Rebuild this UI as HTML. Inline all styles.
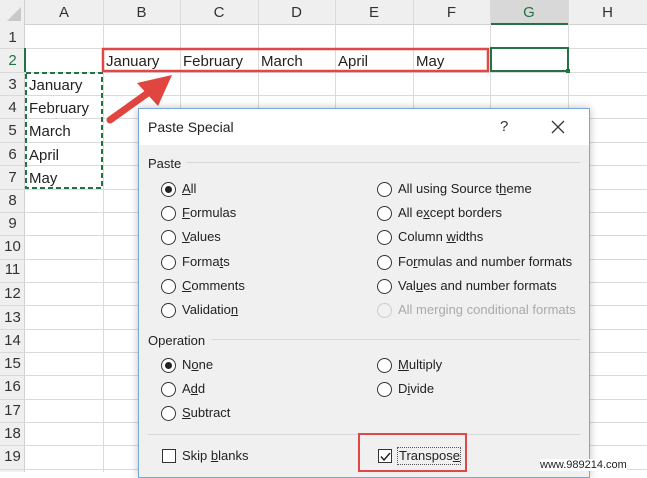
<!DOCTYPE html>
<html><head><style>
*{margin:0;padding:0;box-sizing:border-box}
body{width:647px;height:472px;overflow:hidden;background:#fff;position:relative;font-family:"Liberation Sans",sans-serif}
.a{position:absolute}
.hd{background:#efefef}
.cl{font-size:15px;color:#222}
.rh{font-size:15px;color:#333;width:25px;text-align:center}
.ch{font-size:15px;color:#333;text-align:center;top:4px}
.r{position:absolute;width:15px;height:15px;border:1.3px solid #333;border-radius:50%;background:#fff}
.r.on::after{content:"";position:absolute;left:3px;top:3px;width:7px;height:7px;border-radius:50%;background:#222}
.t{position:absolute;font-size:13px;color:#222}
</style></head><body>
<div class="a hd" style="left:0;top:0;width:647px;height:25px;border-bottom:1px solid #d0d0d0"></div>
<div class="a hd" style="left:0;top:0;width:25px;height:472px;border-right:1px solid #d0d0d0"></div>
<div class="a" style="left:490px;top:0;width:78px;height:25px;background:#d8d8d8;border-bottom:2px solid #217346"></div>
<svg class="a" style="left:6px;top:6px" width="16" height="16"><polygon points="15,1 15,15 1,15" fill="#c8c8c8"/></svg>
<svg class="a" style="left:0;top:0" width="647" height="472">
<g stroke="#dadada" stroke-width="1">
<line x1="103.5" y1="0" x2="103.5" y2="472"/><line x1="180.5" y1="0" x2="180.5" y2="472"/><line x1="258.5" y1="0" x2="258.5" y2="472"/><line x1="335.5" y1="0" x2="335.5" y2="472"/><line x1="413.5" y1="0" x2="413.5" y2="472"/><line x1="490.5" y1="0" x2="490.5" y2="472"/><line x1="568.5" y1="0" x2="568.5" y2="472"/>
<line x1="0" y1="48.5" x2="647" y2="48.5"/><line x1="0" y1="72.5" x2="647" y2="72.5"/><line x1="0" y1="95.5" x2="647" y2="95.5"/><line x1="0" y1="118.5" x2="647" y2="118.5"/><line x1="0" y1="142.5" x2="647" y2="142.5"/><line x1="0" y1="165.5" x2="647" y2="165.5"/><line x1="0" y1="189.5" x2="647" y2="189.5"/><line x1="0" y1="212.5" x2="647" y2="212.5"/><line x1="0" y1="235.5" x2="647" y2="235.5"/><line x1="0" y1="259.5" x2="647" y2="259.5"/><line x1="0" y1="282.5" x2="647" y2="282.5"/><line x1="0" y1="305.5" x2="647" y2="305.5"/><line x1="0" y1="329.5" x2="647" y2="329.5"/><line x1="0" y1="352.5" x2="647" y2="352.5"/><line x1="0" y1="375.5" x2="647" y2="375.5"/><line x1="0" y1="399.5" x2="647" y2="399.5"/><line x1="0" y1="422.5" x2="647" y2="422.5"/><line x1="0" y1="445.5" x2="647" y2="445.5"/><line x1="0" y1="469.5" x2="647" y2="469.5"/>
</g>
<rect x="26" y="73" width="76" height="115" fill="none" stroke="#217346" stroke-width="2" stroke-dasharray="5,3"/>
<rect x="103" y="49" width="385" height="22" fill="none" stroke="#e04848" stroke-width="2.5"/>
<rect x="491" y="48" width="77" height="23" fill="none" stroke="#217346" stroke-width="2"/>
<rect x="566" y="69" width="4" height="4" fill="#217346"/>
<line x1="110" y1="120" x2="152" y2="90" stroke="#e0453f" stroke-width="7" stroke-linecap="round"/>
<polygon points="172,75 137,83 158,106" fill="#e0453f"/>
<line x1="25" y1="48" x2="25" y2="72" stroke="#217346" stroke-width="2"/>
</svg>
<div class="a ch" style="left:25px;width:78px">A</div><div class="a ch" style="left:103px;width:77px">B</div><div class="a ch" style="left:180px;width:78px">C</div><div class="a ch" style="left:258px;width:77px">D</div><div class="a ch" style="left:335px;width:78px">E</div><div class="a ch" style="left:413px;width:77px">F</div><div class="a ch" style="left:490px;width:78px;color:#217346">G</div><div class="a ch" style="left:568px;width:79px">H</div>
<div class="a rh" style="top:29px">1</div><div class="a rh" style="top:52px;color:#217346">2</div><div class="a rh" style="top:76px">3</div><div class="a rh" style="top:99px">4</div><div class="a rh" style="top:122px">5</div><div class="a rh" style="top:146px">6</div><div class="a rh" style="top:169px">7</div><div class="a rh" style="top:192px">8</div><div class="a rh" style="top:215px">9</div><div class="a rh" style="top:238px">10</div><div class="a rh" style="top:261px">11</div><div class="a rh" style="top:285px">12</div><div class="a rh" style="top:309px">13</div><div class="a rh" style="top:332px">14</div><div class="a rh" style="top:355px">15</div><div class="a rh" style="top:378px">16</div><div class="a rh" style="top:402px">17</div><div class="a rh" style="top:425px">18</div><div class="a rh" style="top:448px">19</div>
<div class="a cl" style="left:106px;top:53px">January</div><div class="a cl" style="left:183px;top:53px">February</div><div class="a cl" style="left:261px;top:53px">March</div><div class="a cl" style="left:338px;top:53px">April</div><div class="a cl" style="left:416px;top:53px">May</div>
<div class="a cl" style="left:29px;top:77px">January</div><div class="a cl" style="left:29px;top:100px">February</div><div class="a cl" style="left:29px;top:123px">March</div><div class="a cl" style="left:29px;top:147px">April</div><div class="a cl" style="left:29px;top:170px">May</div>
<div class="a" style="left:138px;top:108px;width:452px;height:370px;background:#f0f0f0;border:1px solid #7aa7d6;box-shadow:0 0 8px rgba(0,0,0,.25)">
<div class="a" style="left:0;top:0;width:450px;height:36px;background:#fff"></div>
</div>
<div class="a" style="left:148px;top:119px;font-size:14px;color:#222">Paste Special</div>
<div class="a" style="left:500px;top:118px;font-size:15px;color:#333">?</div>
<svg class="a" style="left:550px;top:119px" width="16" height="16"><path d="M2 2L14 14M14 2L2 14" stroke="#333" stroke-width="1.3"/></svg>
<div class="t" style="left:148px;top:156px">Paste</div>
<div class="a" style="left:186px;top:162px;width:394px;height:1px;background:#d8d8d8"></div>
<div class="r on" style="left:161px;top:182px"></div><div class="t" style="left:182px;top:181px"><u>A</u>ll</div>
<div class="r" style="left:161px;top:206px"></div><div class="t" style="left:182px;top:205px"><u>F</u>ormulas</div>
<div class="r" style="left:161px;top:230px"></div><div class="t" style="left:182px;top:229px"><u>V</u>alues</div>
<div class="r" style="left:161px;top:255px"></div><div class="t" style="left:182px;top:254px">Forma<u>t</u>s</div>
<div class="r" style="left:161px;top:279px"></div><div class="t" style="left:182px;top:278px"><u>C</u>omments</div>
<div class="r" style="left:161px;top:303px"></div><div class="t" style="left:182px;top:302px">Validatio<u>n</u></div>
<div class="r" style="left:377px;top:182px"></div><div class="t" style="left:398px;top:181px">All using Source t<u>h</u>eme</div>
<div class="r" style="left:377px;top:206px"></div><div class="t" style="left:398px;top:205px">All e<u>x</u>cept borders</div>
<div class="r" style="left:377px;top:230px"></div><div class="t" style="left:398px;top:229px">Column <u>w</u>idths</div>
<div class="r" style="left:377px;top:255px"></div><div class="t" style="left:398px;top:254px">Fo<u>r</u>mulas and number formats</div>
<div class="r" style="left:377px;top:279px"></div><div class="t" style="left:398px;top:278px">Val<u>u</u>es and number formats</div>
<div class="r" style="left:377px;top:303px;border-color:#ccc;background:#f0f0f0"></div><div class="t" style="left:398px;top:302px;color:#aaa">All merging conditional formats</div>
<div class="t" style="left:148px;top:333px">Operation</div>
<div class="a" style="left:212px;top:339px;width:368px;height:1px;background:#d8d8d8"></div>
<div class="r on" style="left:161px;top:358px"></div><div class="t" style="left:182px;top:357px">N<u>o</u>ne</div>
<div class="r" style="left:161px;top:382px"></div><div class="t" style="left:182px;top:381px">A<u>d</u>d</div>
<div class="r" style="left:161px;top:406px"></div><div class="t" style="left:182px;top:405px"><u>S</u>ubtract</div>
<div class="r" style="left:377px;top:358px"></div><div class="t" style="left:398px;top:357px"><u>M</u>ultiply</div>
<div class="r" style="left:377px;top:382px"></div><div class="t" style="left:398px;top:381px">D<u>i</u>vide</div>
<div class="a" style="left:148px;top:434px;width:432px;height:1px;background:#d8d8d8"></div>
<div class="a" style="left:162px;top:449px;width:14px;height:14px;border:1.3px solid #333;background:#fff"></div><div class="t" style="left:182px;top:448px">Skip <u>b</u>lanks</div>
<div class="a" style="left:378px;top:449px;width:14px;height:14px;border:1.3px solid #333;background:#fff"></div>
<svg class="a" style="left:379px;top:450px" width="13" height="13"><path d="M2 6.5L5 10L11 3" stroke="#222" stroke-width="1.4" fill="none"/></svg>
<div class="a" style="left:397px;top:447px;width:64px;height:18px;border:1px dotted #555"></div>
<div class="t" style="left:399px;top:448px">Transpos<u>e</u></div>
<div class="a" style="left:358px;top:433px;width:109px;height:39px;border:2px solid #e04848"></div>
<div class="a" style="left:540px;top:459px;font-size:11px;color:#222;background:#fff">www.989214.com</div>
</body></html>
